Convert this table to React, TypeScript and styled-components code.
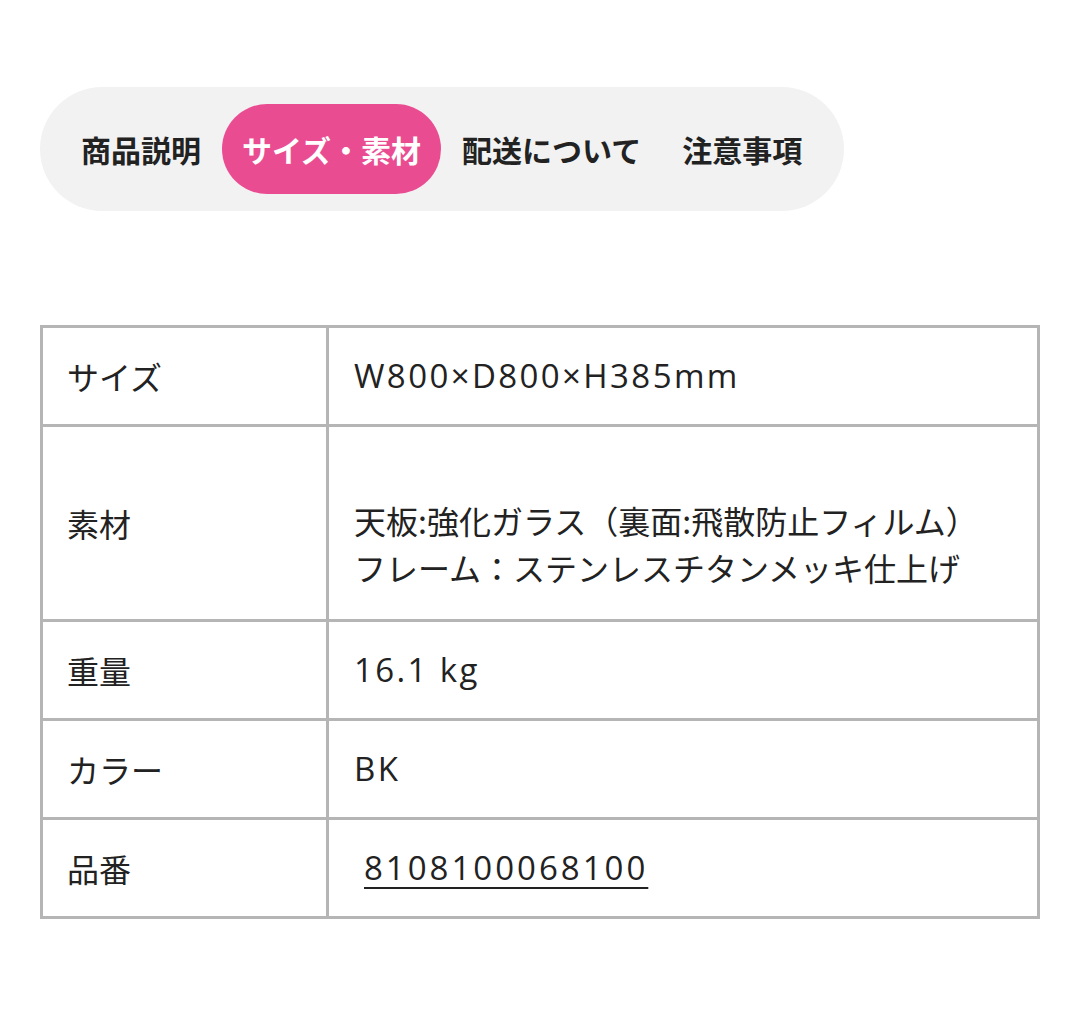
import React from "react";
import styled, { createGlobalStyle } from "styled-components";

const GlobalStyle = createGlobalStyle`
  html, body { margin: 0; padding: 0; background: #ffffff; }
  body { font-family: "Noto Sans CJK JP", "Noto Sans", sans-serif; color: #222222; }
`;

const Page = styled.div`
  padding: 87px 40px 40px 40px;
  display: flex;
  flex-direction: column;
  align-items: flex-start;
  gap: 114px;
`;

const TabBar = styled.div`
  display: flex;
  align-items: center;
  gap: 1px;
  padding: 17px 22px 17px 21px;
  background: #f2f2f2;
  border-radius: 63px;
`;

const Tab = styled.div<{ $active?: boolean }>`
  height: 90px;
  display: flex;
  align-items: center;
  padding: 0 20px;
  border-radius: 45px;
  font-size: 30px;
  font-weight: 700;
  color: ${(p) => (p.$active ? "#ffffff" : "#222222")};
  background: ${(p) => (p.$active ? "#ea4c92" : "transparent")};
`;

const Table = styled.table`
  width: 1000px;
  border-collapse: collapse;
  font-size: 32px;
  color: #222222;
`;

const Row = styled.tr<{ $tall?: boolean }>`
  height: ${(p) => (p.$tall ? 195 : 99)}px;
`;

const Label = styled.td`
  width: 286px;
  box-sizing: border-box;
  border: 3px solid #b5b5b5;
  padding: 0 24px;
  vertical-align: middle;
  line-height: 47px;
`;

const Value = styled.td<{ $multiline?: boolean }>`
  border: 3px solid #b5b5b5;
  padding: ${(p) => (p.$multiline ? "0 25px 6px 25px" : "0 25px 2px 25px")};
  vertical-align: middle;
  line-height: 47px;
`;

const Latin = styled.span<{ $spacing?: number }>`
  font-family: "Open Sans", "Noto Sans CJK JP", sans-serif;
  font-size: 33px;
  letter-spacing: ${(p) => p.$spacing ?? 2.4}px;
`;

const Code = styled.a`
  color: #222222;
  text-decoration: underline;
  text-underline-offset: 7px;
  text-decoration-thickness: 2px;
  margin-left: 10px;
`;

const tabs = ["商品説明", "サイズ・素材", "配送について", "注意事項"];

export default function App() {
  return (
    <>
      <GlobalStyle />
      <Page>
        <TabBar>
          {tabs.map((t, i) => (
            <Tab key={t} $active={i === 1}>
              {t}
            </Tab>
          ))}
        </TabBar>
        <Table>
          <tbody>
            <Row>
              <Label>サイズ</Label>
              <Value>
                <Latin>W800×D800×H385mm</Latin>
              </Value>
            </Row>
            <Row $tall>
              <Label>素材</Label>
              <Value $multiline>
                <br />
                天板:強化ガラス（裏面:飛散防止フィルム）
                <br />
                フレーム：ステンレスチタンメッキ仕上げ
              </Value>
            </Row>
            <Row>
              <Label>重量</Label>
              <Value>
                <Latin>16.1 kg</Latin>
              </Value>
            </Row>
            <Row>
              <Label>カラー</Label>
              <Value>
                <Latin>BK</Latin>
              </Value>
            </Row>
            <Row>
              <Label>品番</Label>
              <Value>
                <Code href="#">
                  <Latin $spacing={3}>8108100068100</Latin>
                </Code>
              </Value>
            </Row>
          </tbody>
        </Table>
      </Page>
    </>
  );
}
